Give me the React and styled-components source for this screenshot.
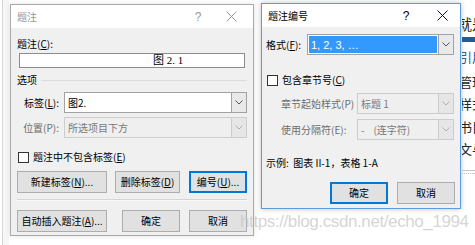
import React from 'react'
import styled, { createGlobalStyle } from 'styled-components'

const Global = createGlobalStyle`
  html, body {
    margin: 0;
    padding: 0;
    background: #fff;
  }
  body {
    font-family: "Noto Sans CJK SC", "Noto Sans", sans-serif;
    font-size: 10px;
    color: #000;
  }
`

const Page = styled.div`
  position: relative;
  width: 475px;
  height: 245px;
  overflow: hidden;
  display: flex;
  align-items: flex-start;
  background: #fff;
`

const LeftEdge = styled.div`
  width: 6px;
  margin-left: 2px;
  align-self: stretch;
  border-left: 1px solid #d6d6d6;
  background: #f6f6f6;
`

const Dialog = styled.div`
  box-sizing: border-box;
  flex: none;
  display: flex;
  flex-direction: column;
  margin-top: ${p => p.$top}px;
  margin-left: ${p => p.$left || 0}px;
  width: ${p => p.$w}px;
  height: ${p => p.$h}px;
  background: #f0f0f0;
  border: 1px solid ${p => (p.$active ? '#5b9ee0' : '#a9a9a9')};
  box-shadow: 0 0 5px rgba(0, 0, 0, ${p => (p.$active ? 0.25 : 0.12)});
  white-space: nowrap;
`

const TitleBar = styled.div`
  height: 23px;
  flex: none;
  display: flex;
  align-items: center;
  padding-left: ${p => p.$pad}px;
  background: #fff;
  color: ${p => (p.$active ? '#000' : '#999')};
`

const Title = styled.div`
  flex: 1;
  line-height: 14px;
`

const TitleBtn = styled.div`
  width: ${p => p.$w}px;
  display: flex;
  justify-content: center;
  font-family: "Liberation Sans", sans-serif;
  font-size: 12px;
  color: inherit;
`

const Body = styled.div`
  flex: 1;
  display: flex;
  flex-direction: column;
  padding: 0 ${p => p.$pr}px 0 ${p => p.$pl}px;
`

const Label = styled.div`
  line-height: 14px;
  margin-top: ${p => p.$mt || 0}px;
  color: ${p => (p.$disabled ? '#6d6d6d' : '#000')};
`

const TextBox = styled.div`
  box-sizing: border-box;
  margin-top: ${p => p.$mt}px;
  margin-left: 2px;
  width: 226px;
  height: 15px;
  background: #fff;
  border: 1px solid #8c8c8c;
  padding-left: 133px;
  font-family: "Liberation Serif", "Noto Sans CJK SC", serif;
  font-size: 11px;
  line-height: 13px;
`

const GroupHead = styled.div`
  display: flex;
  align-items: center;
  gap: 4px;
  margin-top: ${p => p.$mt}px;
  line-height: 14px;

  &::after {
    content: '';
    flex: 1;
    height: 1px;
    background: #dcdcdc;
  }
`

const Row = styled.div`
  display: flex;
  align-items: center;
  margin-top: ${p => p.$mt}px;
`

const RowLabel = styled.div`
  box-sizing: border-box;
  width: ${p => p.$w}px;
  padding-left: ${p => p.$pl || 0}px;
  padding-right: ${p => p.$pr || 0}px;
  text-align: ${p => p.$align || 'left'};
  line-height: 14px;
  color: ${p => (p.$disabled ? '#6d6d6d' : '#000')};
`

const Select = styled.div`
  box-sizing: border-box;
  display: flex;
  width: ${p => p.$w}px;
  height: 21px;
  margin-left: ${p => p.$ml || 0}px;
  background: ${p => (p.$disabled ? '#efefef' : '#fff')};
  border: 1px solid ${p => (p.$disabled ? '#cccccc' : '#a2a2a2')};
`

const SelectValue = styled.div`
  flex: 1;
  display: flex;
  align-items: center;
  margin: ${p => (p.$selected ? '1px' : '0')};
  padding-left: ${p => (p.$selected ? 2 : 3)}px;
  background: ${p => (p.$selected ? '#3399ff' : 'transparent')};
  color: ${p => (p.$selected ? '#fff' : p.$disabled ? '#7a7a7a' : '#000')};
  font-family: ${p => (p.$latin ? '"Liberation Sans", sans-serif' : 'inherit')};
  font-size: ${p => (p.$latin ? 11 : 10)}px;
  line-height: 14px;
  white-space: pre;
`

const Arrow = styled.div`
  width: 14px;
  flex: none;
  display: flex;
  align-items: center;
  justify-content: center;
  border-left: 1px solid ${p => (p.$disabled ? '#cccccc' : '#a2a2a2')};
  background: ${p => (p.$disabled ? '#e6e6e6' : '#e9e9e9')};
`

const Check = styled.div`
  box-sizing: border-box;
  width: 11px;
  height: 11px;
  margin-left: 1px;
  margin-right: 4px;
  background: #fff;
  border: 1px solid #333;
`

const ButtonRow = styled.div`
  display: flex;
  justify-content: ${p => p.$justify || 'flex-start'};
  gap: ${p => p.$gap || 0}px;
  margin-top: ${p => p.$mt}px;
`

const Button = styled.div`
  box-sizing: border-box;
  width: ${p => p.$w}px;
  height: 22px;
  margin-left: ${p => p.$ml || 0}px;
  display: flex;
  align-items: center;
  justify-content: center;
  background: #e1e1e1;
  border: ${p => (p.$focus ? '2px solid #0078d7' : '1px solid #adadad')};
  line-height: 14px;
`

const Separator = styled.div`
  height: 1px;
  margin-top: ${p => p.$mt}px;
  background: #d5d5d5;
  box-shadow: 0 1px 0 #fafafa;
`

const Example = styled.div`
  margin-top: ${p => p.$mt}px;
  line-height: 14px;
`

const DocStrip = styled.div`
  flex: 1;
  align-self: stretch;
  margin-left: 1px;
  overflow: hidden;
  display: flex;
  flex-direction: column;
  white-space: nowrap;
`

const DocText = styled.div`
  margin-top: ${p => p.$mt}px;
  line-height: 16px;
  font-size: ${p => p.$size || 13}px;
  color: ${p => p.$color || '#222'};
  text-indent: ${p => p.$indent || 0}px;
`

const DocBar = styled.div`
  height: 5px;
  margin-top: ${p => p.$mt}px;
  background: #2b579a;
`

const DocRule = styled.div`
  height: 2px;
  margin-top: ${p => p.$mt}px;
  border-top: 1px solid #c8c8c8;
  border-bottom: 1px dotted #bbb;
`

const Watermark = styled.div`
  position: absolute;
  left: 240px;
  top: 211px;
  font-family: "Liberation Sans", sans-serif;
  font-size: 17px;
  letter-spacing: -0.4px;
  line-height: 22px;
  color: rgba(195, 195, 195, 0.7);
  pointer-events: none;
`

function Chevron({ color = '#555' }) {
  return (
    <svg width="8" height="5" viewBox="0 0 8 5">
      <path d="M0.5 0.5 L4 4 L7.5 0.5" fill="none" stroke={color} strokeWidth="1" />
    </svg>
  )
}

function CloseIcon({ color }) {
  return (
    <svg width="11" height="11" viewBox="0 0 11 11">
      <path d="M0.5 0.5 L10.5 10.5 M10.5 0.5 L0.5 10.5" stroke={color} strokeWidth="1" />
    </svg>
  )
}

function Dropdown({ w, ml, value, disabled, selected, latin }) {
  return (
    <Select $w={w} $ml={ml} $disabled={disabled}>
      <SelectValue $selected={selected} $disabled={disabled} $latin={latin}>{value}</SelectValue>
      <Arrow $disabled={disabled}>
        <Chevron color={disabled ? '#b0b0b0' : '#555'} />
      </Arrow>
    </Select>
  )
}

function u(ch) {
  return <span style={{ textDecoration: 'underline' }}>{ch}</span>
}

export default function App() {
  return (
    <>
      <Global />
      <Page>
        <LeftEdge />

        <Dialog $top={4} $left={1} $w={244} $h={232}>
          <TitleBar $pad={6}>
            <Title>题注</Title>
            <TitleBtn $w={22}>?</TitleBtn>
            <TitleBtn $w={44}><CloseIcon color="#9a9a9a" /></TitleBtn>
          </TitleBar>
          <Body $pl={6} $pr={6}>
            <Label $mt={9}>题注({u('C')}):</Label>
            <TextBox $mt={2}>图 2. 1</TextBox>
            <GroupHead $mt={5}>选项</GroupHead>
            <Row $mt={5}>
              <RowLabel $w={44} $pr={2} $align="right">标签({u('L')}):</RowLabel>
              <Dropdown w={183} ml={3} value="图2." />
            </Row>
            <Row $mt={4}>
              <RowLabel $w={44} $pr={2} $align="right" $disabled>位置(P):</RowLabel>
              <Dropdown w={183} ml={3} value="所选项目下方" disabled />
            </Row>
            <Row $mt={12}>
              <Check />
              <Label>题注中不包含标签({u('E')})</Label>
            </Row>
            <ButtonRow $mt={7}>
              <Button $w={90}>新建标签({u('N')})...</Button>
              <Button $w={65} $ml={8}>删除标签({u('D')})</Button>
              <Button $w={58} $ml={9} $focus>编号({u('U')})...</Button>
            </ButtonRow>
            <Separator $mt={6} />
            <ButtonRow $mt={10}>
              <Button $w={90}>自动插入题注({u('A')})...</Button>
              <Button $w={58} $ml={15}>确定</Button>
              <Button $w={58} $ml={9}>取消</Button>
            </ButtonRow>
          </Body>
        </Dialog>

        <Dialog $top={3} $left={7} $w={200} $h={206} $active>
          <TitleBar $pad={6} $active>
            <Title>题注编号</Title>
            <TitleBtn $w={36}>?</TitleBtn>
            <TitleBtn $w={36}><CloseIcon color="#111" /></TitleBtn>
          </TitleBar>
          <Body $pl={4} $pr={5}>
            <Row $mt={7}>
              <RowLabel $w={41}>格式({u('F')}):</RowLabel>
              <Dropdown w={147} value="1, 2, 3, …" selected latin />
            </Row>
            <Row $mt={18}>
              <Check />
              <Label>包含章节号({u('C')})</Label>
            </Row>
            <Row $mt={6}>
              <RowLabel $w={91} $pl={15} $disabled>章节起始样式(P)</RowLabel>
              <Dropdown w={97} value="标题 1" disabled />
            </Row>
            <Row $mt={5}>
              <RowLabel $w={91} $pl={15} $disabled>使用分隔符(E):</RowLabel>
              <Dropdown w={97} value={'-    (连字符)'} disabled />
            </Row>
            <Example $mt={16}>示例:&nbsp; 图表 II-1，表格 1-A</Example>
            <ButtonRow $mt={12} $justify="flex-end" $gap={9}>
              <Button $w={58} $focus>确定</Button>
              <Button $w={58}>取消</Button>
            </ButtonRow>
          </Body>
        </Dialog>

        <DocStrip>
          <DocText $mt={16} $size={15} $indent={-5}>就是</DocText>
          <DocBar $mt={5} />
          <DocText $mt={7} $color="#2b579a" $indent={-3}>引用</DocText>
          <DocText $mt={9} $indent={-3}>管理</DocText>
          <DocText $mt={6} $indent={-3}>样式</DocText>
          <DocText $mt={7} $indent={-3}>书目</DocText>
          <DocText $mt={6} $indent={-3}>文与</DocText>
          <DocRule $mt={13} />
        </DocStrip>

        <Watermark>https://blog.csdn.net/echo_1994</Watermark>
      </Page>
    </>
  )
}
